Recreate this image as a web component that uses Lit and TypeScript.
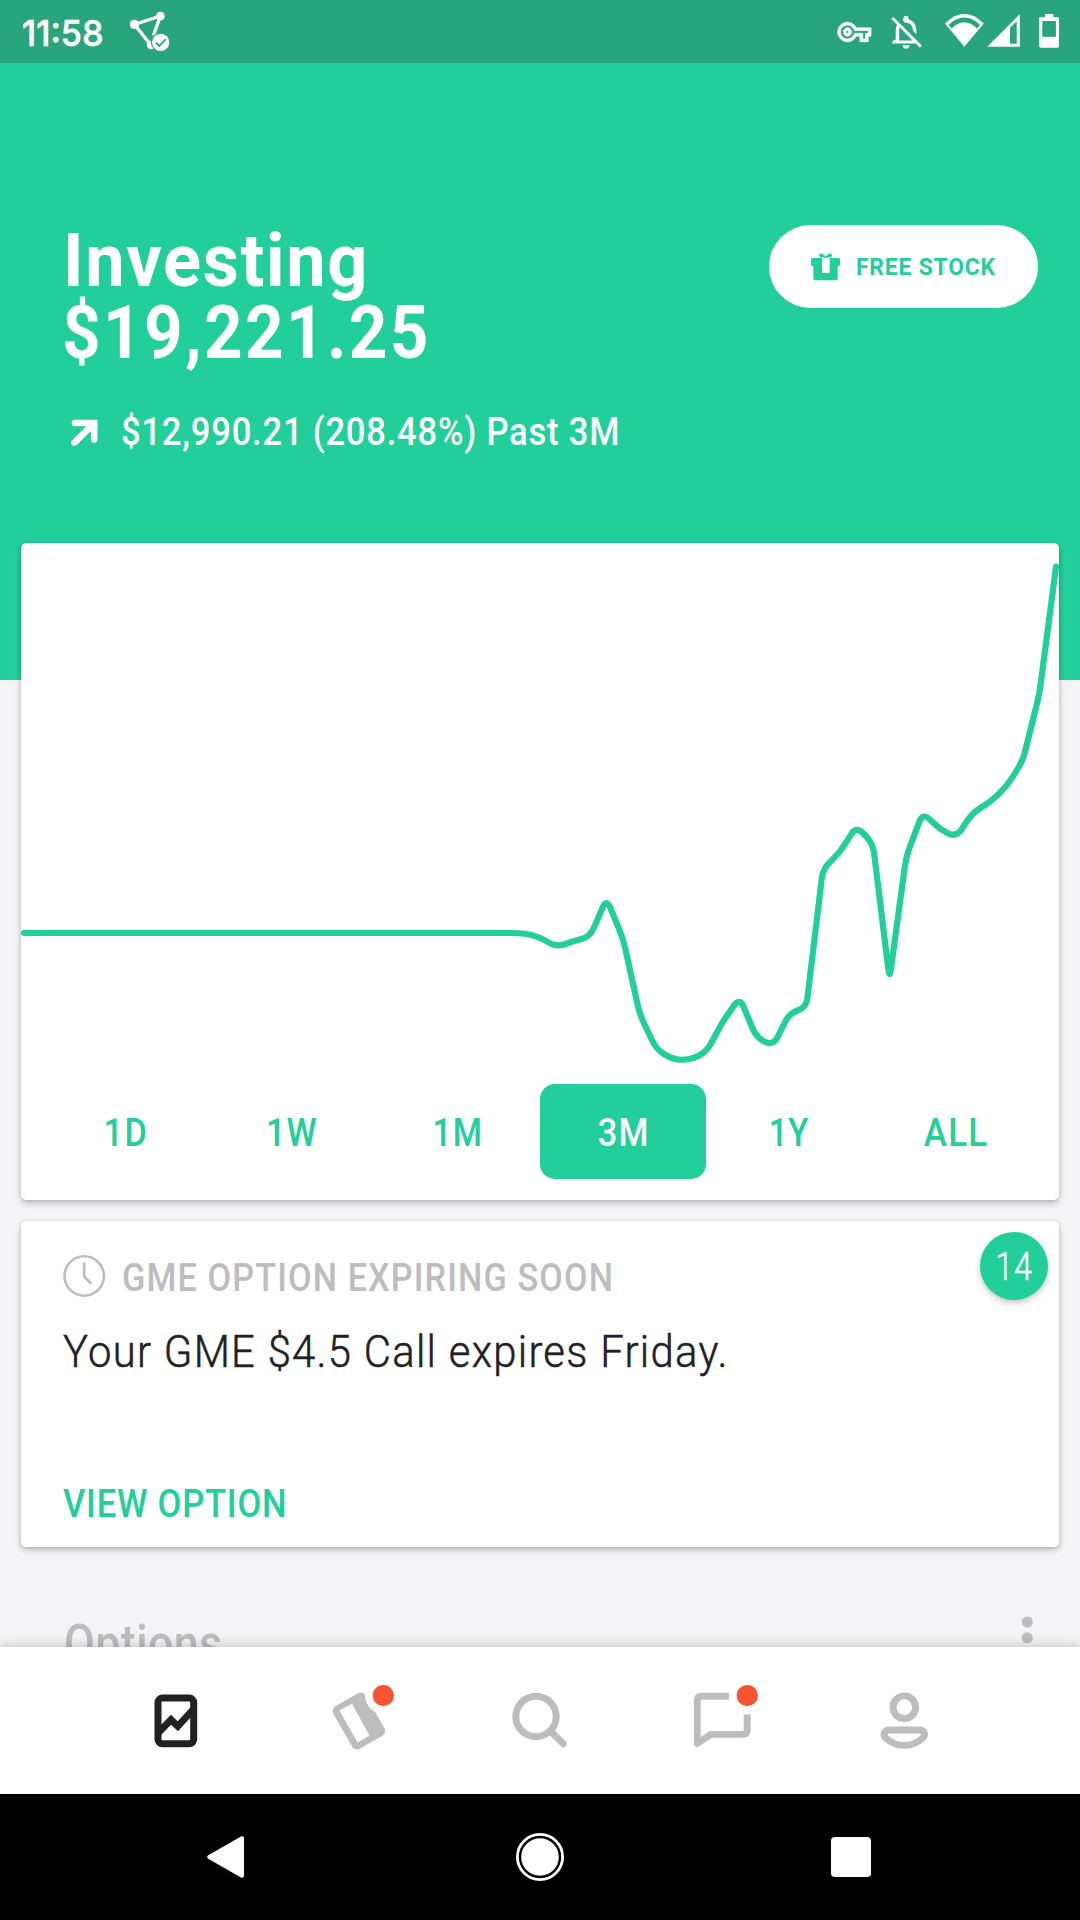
import { LitElement, html, svg, css } from "lit";
import { customElement, property } from "lit/decorators.js";
import { styleMap } from "lit/directives/style-map.js";
import { classMap } from "lit/directives/class-map.js";

/** One line of condensed text: a horizontal scale plus letter tracking. */
@customElement("tracked-text")
class TrackedText extends LitElement {
  @property() text = "";
  @property({ type: Number }) scale = 0.9;
  @property({ type: Number }) tracking = 0;
  @property() origin = "left";

  static styles = css`
    :host { display: block; white-space: nowrap; }
    .line { display: inline-block; }
  `;

  render() {
    return html`<span
      class="line"
      style=${styleMap({
        transform: `scaleX(${this.scale})`,
        transformOrigin: this.origin,
        letterSpacing: `${this.tracking}px`,
        marginRight: `${-this.tracking}px`,
      })}
      >${this.text}</span
    >`;
  }
}

/** Portfolio value over time, in chart canvas units. */
const FLAT = 933;
const START_X = 606.5;
const STEP = 16.65;
const HISTORY = [
  898.5, 939, 1014.5, 1049.5, 1059.5, 1060, 1052, 1021, 997.5, 1037.5, 1046, 1013, 1007.5,
  868.5, 853, 826, 843.5, 979, 856.5, 812.5, 829, 837.5, 812.5, 802.5, 787, 761, 693.5, 566.5,
];
const POINTS: [number, number][] = [
  [24, FLAT],
  [523, FLAT],
  [540, 937],
  [556.5, 947.5],
  [573, 941],
  [589.9, 937],
  ...HISTORY.map((y, i) => [START_X + i * STEP, y] as [number, number]),
];

/** Polyline with every corner rounded off by a quadratic. */
function roundedPath(points: [number, number][], radius: number): string {
  let d = `M${points[0][0]} ${points[0][1]}`;
  for (let i = 1; i < points.length - 1; i++) {
    const [px, py] = points[i - 1];
    const [x, y] = points[i];
    const [nx, ny] = points[i + 1];
    const a = Math.hypot(px - x, py - y);
    const b = Math.hypot(nx - x, ny - y);
    const ra = Math.min(radius, a / 2) / a;
    const rb = Math.min(radius, b / 2) / b;
    d += `L${x + (px - x) * ra} ${y + (py - y) * ra}Q${x} ${y} ${x + (nx - x) * rb} ${y + (ny - y) * rb}`;
  }
  const last = points[points.length - 1];
  return d + `L${last[0]} ${last[1]}`;
}

const RANGES = [
  { label: "1D", scale: 0.9, tracking: 1.7 },
  { label: "1W", scale: 0.9, tracking: 1.4 },
  { label: "1M", scale: 0.88, tracking: 1.5 },
  { label: "3M", scale: 0.9, tracking: 1.2 },
  { label: "1Y", scale: 0.88, tracking: 0.4 },
  { label: "ALL", scale: 0.92, tracking: 1.3 },
];
const ACTIVE_RANGE = "3M";

const DOT = svg`<circle cx="25.3" cy="-25.4" r="10.6" fill="#f55531"/>`;

const NAV_ICONS = [
  svg`<g fill="none" stroke="#212123" stroke-width="7">
    <rect x="-18" y="-22.9" width="35.7" height="45.6" rx="4.4"/>
    <path d="M-18 12L-5-1.3 1.8 5.3 18-12.3"/></g>`,
  svg`<rect x="-18.6" y="-24.5" width="37.2" height="49" rx="5.5" transform="translate(.9 0) rotate(-30)" fill="#bdbdbf"/>
    <path d="M-18.6-10.5L-5.9-17.2 11.4 14.5-.4 21.5z" fill="#fff"/>
    <circle cx="25.3" cy="-25.4" r="18.2" fill="#fff"/>${DOT}`,
  svg`<g fill="none" stroke="#bdbdbf" stroke-width="6.9">
    <circle cx="-4" cy="-4.5" r="20.2"/><path d="M10.6 10.4L23.3 22.8" stroke-linecap="round"/></g>`,
  svg`<path d="M6.9-24.8H-20.2Q-24.7-24.8-24.7-20.3V22.5L-11.2 13.4H20.7Q25.2 13.4 25.2 9V-6.5" fill="none" stroke="#bdbdbf" stroke-width="6.9" stroke-linejoin="round"/>${DOT}`,
  svg`<g fill="none" stroke="#bdbdbf" stroke-width="6.9">
    <circle cx=".3" cy="-13.8" r="11.3"/>
    <path d="M-14.7 9H15.3C20.3 9 21.9 13.6 19.1 16.6 14.3 21.3 7.3 24.4.3 24.4S-13.7 21.3-18.5 16.6C-21.3 13.6-19.7 9-14.7 9z"/></g>`,
];

@customElement("app-root")
class AppRoot extends LitElement {
  static styles = css`
    :host {
      --green: #22cf9a;
      --status: #28a57d;
      --muted: #bdbdbf;
      --shadow: 0 3px 6px rgba(0, 0, 0, 0.24), 0 0 3px rgba(0, 0, 0, 0.12);
      display: flex;
      flex-direction: column;
      width: 1080px;
      height: 1920px;
      overflow: hidden;
      background: #f4f4f7;
      font-family: Roboto, "Liberation Sans", sans-serif;
      font-weight: 500;
      color: #fff;
    }
    svg { display: block; flex: none; }
    .status {
      flex: none;
      display: flex;
      height: 63px;
      padding: 0 20px 0 22px;
      background: var(--status);
    }
    .time {
      width: 108px;
      font: 500 36px/66px Inter, Roboto, sans-serif;
      -webkit-text-stroke: 0.6px #fff;
    }
    .spacer { flex: 1; }
    .key { margin-right: 16px; }
    .bell { margin-right: 20px; }
    .wifi { margin-right: 1px; }
    .signal { margin-right: 18px; }

    .content { flex: 1; min-height: 0; overflow: hidden; }
    .hero {
      box-sizing: border-box;
      height: 617px;
      padding: 162px 42px 0 63px;
      background: var(--green);
    }
    .hero-row { display: flex; justify-content: space-between; align-items: flex-start; }
    .headline { font-size: 74px; line-height: 72px; font-weight: 700; }
    .amount { margin-left: -1px; }
    .change {
      display: flex;
      align-items: center;
      gap: 23px;
      margin-top: 41px;
      padding-left: 8px;
      font-size: 38px;
      line-height: 44px;
    }
    .arrow { margin-top: 2px; }
    .reward {
      box-sizing: border-box;
      display: flex;
      align-items: center;
      gap: 16px;
      width: 269px;
      height: 83px;
      padding-left: 42px;
      border-radius: 42px;
      background: #fff;
      color: var(--green);
      font-size: 24px;
      line-height: 86px;
      font-weight: 700;
    }

    .card {
      position: relative;
      margin: 0 21px 21px;
      border-radius: 5px;
      background: #fff;
      box-shadow: var(--shadow);
    }
    .chart-card { margin-top: -137px; padding-bottom: 21px; }
    .tabs { display: grid; grid-template-columns: repeat(6, 1fr); padding: 0 21px; }
    .tab {
      display: flex;
      justify-content: center;
      height: 95px;
      border-radius: 15px;
      color: var(--green);
      font-size: 38px;
      line-height: 98px;
    }
    .tab.active { background: var(--green); color: #fff; }

    .notice { margin-bottom: 0; padding: 34px 42px 21px; }
    .notice-title {
      display: flex;
      gap: 16px;
      color: var(--muted);
      font-size: 38px;
      line-height: 46px;
    }
    .message {
      margin-top: 23px;
      color: #212123;
      font-size: 44px;
      line-height: 56px;
      font-weight: 300;
      -webkit-text-stroke: 0.5px #212123;
    }
    .action { margin-top: 102px; color: var(--green); font-size: 38px; line-height: 44px; }
    .badge {
      position: absolute;
      top: 11px;
      right: 11px;
      display: flex;
      justify-content: center;
      width: 68px;
      height: 68px;
      border-radius: 50%;
      background: var(--green);
      box-shadow: 0 3px 6px rgba(0, 0, 0, 0.22);
      font-size: 38px;
      line-height: 70px;
      font-weight: 300;
      -webkit-text-stroke: 0.5px #fff;
    }
    .section {
      display: flex;
      justify-content: space-between;
      margin-top: 67px;
      padding: 0 46px 0 64px;
      color: var(--muted);
      font-size: 52px;
      line-height: 60px;
    }

    .nav {
      position: relative;
      flex: none;
      display: grid;
      grid-template-columns: repeat(5, 182.2px);
      justify-content: center;
      align-items: center;
      justify-items: center;
      height: 147px;
      background: #fff;
      box-shadow: 0 0 12px rgba(0, 0, 0, 0.24);
    }
    .system {
      position: relative;
      flex: none;
      display: grid;
      grid-template-columns: repeat(3, 311px);
      justify-content: center;
      align-items: center;
      justify-items: center;
      height: 126px;
      background: #000;
    }
  `;

  private renderStatus() {
    return html`<div class="status">
      <tracked-text class="time" text="11:58" .scale=${0.95} .tracking=${0}></tracked-text>
      <svg width="40" height="63" viewBox="130 0 40 63" fill="#fff">
        <path d="M150 44L134.5 24.5 160.3 16 153.5 35.5" fill="none" stroke="#fff" stroke-width="3.3"/>
        <circle cx="134.4" cy="24.4" r="4.7"/><circle cx="160.3" cy="16.2" r="4.4"/><circle cx="151" cy="45" r="4.2"/>
        <circle cx="160.7" cy="42.4" r="9.8" fill="#28a57d"/><circle cx="160.7" cy="42.4" r="8.6"/>
        <path d="M156 42.6L159.3 46 165.8 39.2" fill="none" stroke="#28a57d" stroke-width="1.8"/>
      </svg>
      <div class="spacer"></div>
      <svg class="key" width="36" height="63" viewBox="836 0 36 63" fill="#fff">
        <path transform="translate(837.7 15.3) scale(1.39)" stroke="#fff" stroke-width=".45" d="M22 19h-6v-4h-2.68c-1.14 2.42-3.6 4-6.32 4-3.86 0-7-3.14-7-7s3.14-7 7-7c2.72 0 5.17 1.58 6.32 4H24v6h-2v4zm-4-2h2v-4h2v-2H11.94l-.23-.67C11.01 8.34 9.11 7 7 7c-2.76 0-5 2.24-5 5s2.24 5 5 5c2.11 0 4.01-1.34 4.71-3.33l.23-.67H18v4zM7 15c-1.65 0-3-1.35-3-3s1.35-3 3-3 3 1.35 3 3-1.35 3-3 3zm0-4c-.55 0-1 .45-1 1s.45 1 1 1 1-.45 1-1-.45-1-1-1z"/>
      </svg>
      <svg class="bell" width="38" height="63" viewBox="888 0 38 63" fill="#fff">
        <path transform="translate(885.4 11.4) scale(1.72 1.75)" d="M12 21.3c1.1 0 2-.9 2-2h-4c0 1.1.9 2 2 2zm0-14.8c2.49 0 4 2.02 4 4.5v.1l2 2V11c0-3.07-1.63-5.64-4.5-6.32V4c0-.83-.67-1.5-1.5-1.5s-1.5.67-1.5 1.5v.68c-.24.06-.47.15-.69.23l1.64 1.64c.18-.02.36-.05.55-.05zM4.6 3.2L3.4 4.4l3.41 3.27C6.29 8.57 6 9.74 6 11v5l-2 1v1.4h13.64l2.34 2.34 1.21-1.21L4.6 3.2zM16 16.6H8V11c0-.68.12-1.32.34-1.9L15.8 16.6z"/>
      </svg>
      <svg class="wifi" width="41" height="63" viewBox="946 0 41 63" fill="#fff" style="margin-left:-2px">
        <path d="M947 23.5Q966.3 4.7 985.7 23.5L966.3 46.8z"/>
        <path d="M950.6 24.9Q966.3 10.2 982 24.9L979 28.4Q966.3 16 953.6 28.4z" fill="#28a57d"/>
      </svg>
      <svg class="signal" width="34" height="63" viewBox="986 0 34 63" fill="#fff">
        <path d="M987.2 46.8L1019.8 14.3V46.8z"/>
        <path d="M1010 43.7V27.8L1016.7 21.2V43.7z" fill="#28a57d"/>
      </svg>
      <svg width="22" height="63" viewBox="1038 0 22 63" fill="#fff">
        <rect x="1045" y="14" width="8.3" height="5"/><rect x="1039" y="17" width="20" height="30.7" rx="1.8"/>
        <rect x="1042.3" y="21" width="13.6" height="15.8" fill="#28a57d"/>
      </svg>
    </div>`;
  }

  private renderHero() {
    return html`<div class="hero">
      <div class="hero-row">
        <div class="headline">
          <tracked-text text="Investing" .scale=${0.95} .tracking=${1.75}></tracked-text>
          <tracked-text class="amount" text="$19,221.25" .scale=${0.91} .tracking=${2.6}></tracked-text>
        </div>
        <div class="reward">
          <svg width="29" height="28" viewBox="811 252 29 28" fill="#22cf9a">
            <path d="M812.5 257H838.5Q840 257 840 258.5V263.5Q840 265 838.5 265H837.7V277.5Q837.7 279.3 836 279.3H815Q813.3 279.3 813.3 277.5V265H812.5Q811 265 811 263.5V258.5Q811 257 812.5 257z"/>
            <path d="M822 257H829.7V272H822z" fill="#fff"/>
            <path d="M825.6 257.2L823.4 256.4 820.6 256.6Q817.8 254.2 820.4 252.6 822.6 251.6 825.6 255.8 828.6 251.6 830.8 252.6 833.4 254.2 830.6 256.6L827.8 256.4z"/>
          </svg>
          <tracked-text text="FREE STOCK" .scale=${0.95} .tracking=${0.9}></tracked-text>
        </div>
      </div>
      <div class="change">
        <svg class="arrow" width="27" height="28" viewBox="71 419 27 28" fill="none" stroke="#fff" stroke-width="6.6" stroke-linecap="round">
          <path d="M75 423H94.2V439.5M94 423.2L74.4 442.6"/>
        </svg>
        <tracked-text text="$12,990.21 (208.48%) Past 3M" .scale=${0.91} .tracking=${0.85}></tracked-text>
      </div>
    </div>`;
  }

  render() {
    return html`
      ${this.renderStatus()}
      <div class="content">
        ${this.renderHero()}
        <div class="card chart-card">
          <svg width="1038" height="541" viewBox="21 543 1038 541">
            <path d=${roundedPath(POINTS, 10)} fill="none" stroke="#22cf9a" stroke-width="6.2" stroke-linecap="round" stroke-linejoin="round"/>
          </svg>
          <div class="tabs">
            ${RANGES.map(
              (r) => html`<div class=${classMap({ tab: true, active: r.label === ACTIVE_RANGE })}>
                <tracked-text text=${r.label} origin="center" .scale=${r.scale} .tracking=${r.tracking}></tracked-text>
              </div>`
            )}
          </div>
        </div>
        <div class="card notice">
          <div class="notice-title">
            <svg width="43" height="42" viewBox="0 0 43 42" fill="none" stroke="#bdbdbf" stroke-width="2.6">
              <circle cx="21.2" cy="21" r="19.7"/><path d="M21.2 8.5V21.5L27.5 28" stroke-linecap="round" stroke-linejoin="round"/>
            </svg>
            <tracked-text text="GME OPTION EXPIRING SOON" .scale=${0.9} .tracking=${1.25}></tracked-text>
          </div>
          <tracked-text class="message" text="Your GME $4.5 Call expires Friday." .scale=${0.95} .tracking=${1.35}></tracked-text>
          <tracked-text class="action" text="VIEW OPTION" .scale=${0.91} .tracking=${0.85}></tracked-text>
          <div class="badge"><tracked-text text="14" origin="center" .scale=${0.85} .tracking=${1}></tracked-text></div>
        </div>
        <div class="section">
          <tracked-text text="Options" .scale=${0.86} .tracking=${0.5}></tracked-text>
          <svg width="14" height="48" viewBox="0 0 14 48" fill="#bdbdbf">
            <circle cx="7.3" cy="8" r="5.5"/><circle cx="7.3" cy="23.8" r="5.5"/><circle cx="7.3" cy="39.6" r="5.5"/>
          </svg>
        </div>
      </div>
      <div class="nav">
        ${NAV_ICONS.map((icon) => html`<svg width="80" height="80" viewBox="-40 -40 80 80">${icon}</svg>`)}
      </div>
      <div class="system">
        <svg width="48" height="48" viewBox="-24 -24 48 48" fill="#fff" stroke="#fff" stroke-width="4" stroke-linejoin="round"><path d="M-19.8 0L13-18.7V18.7z"/></svg>
        <svg width="50" height="50" viewBox="-25 -25 50 50" fill="#fff"><circle r="18.8"/><circle r="22.6" fill="none" stroke="#fff" stroke-width="2.8"/></svg>
        <svg width="40" height="40" viewBox="0 0 40 40" fill="#fff"><rect width="40" height="40" rx="4"/></svg>
      </div>
    `;
  }
}
